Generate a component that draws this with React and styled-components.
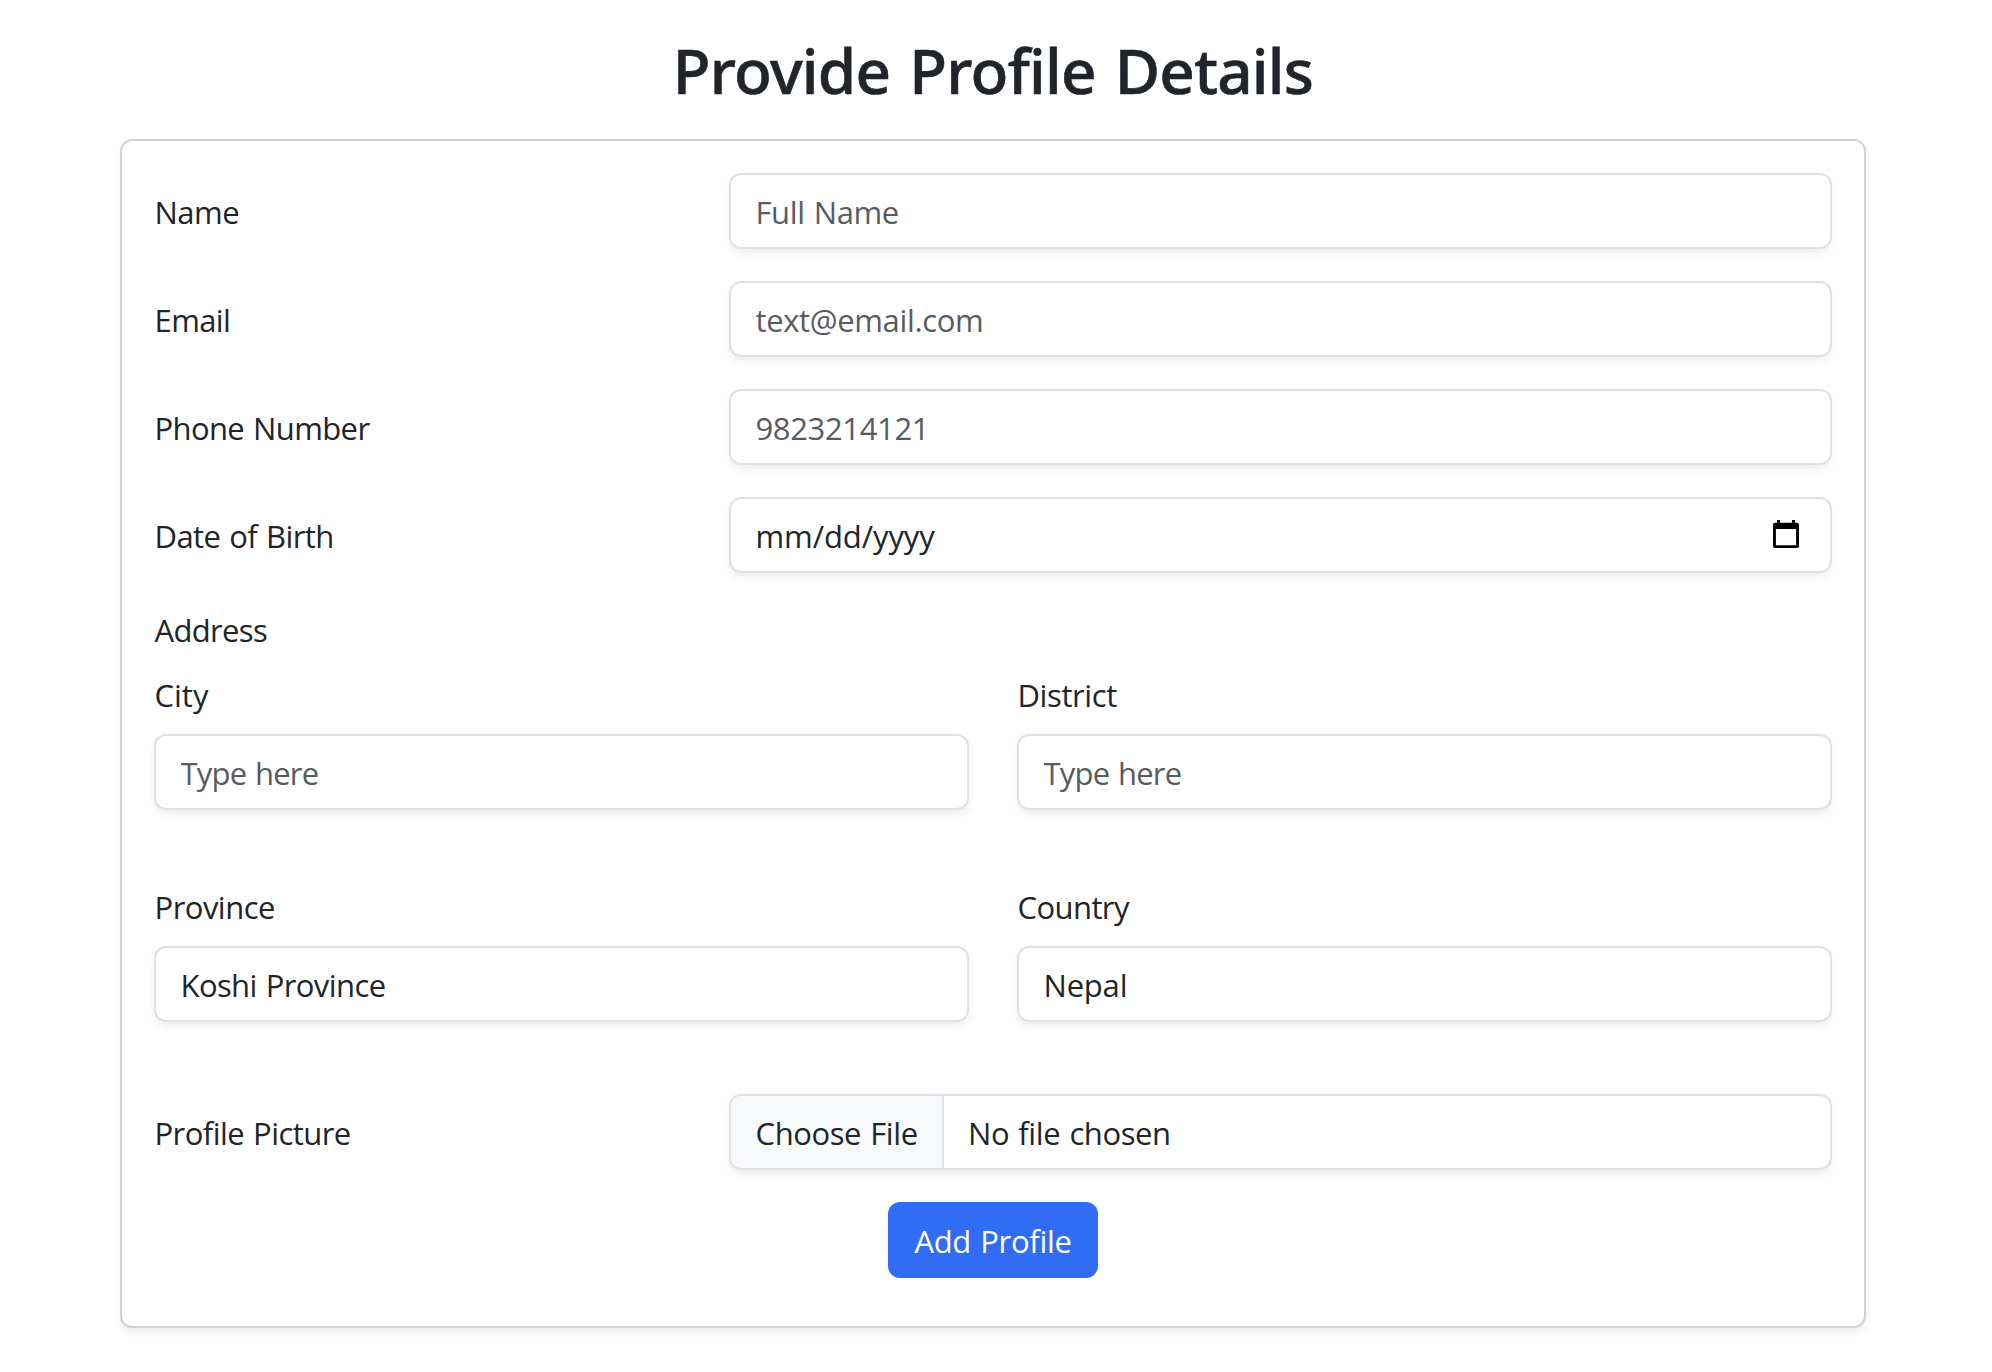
import React from 'react';
import styled, { createGlobalStyle } from 'styled-components';

const GlobalStyle = createGlobalStyle`
  *, *::before, *::after { box-sizing: border-box; }
  body {
    margin: 0;
    background: #fff;
    color: #212529;
    font-family: "Open Sans", "Noto Sans", sans-serif;
    font-size: 31px;
    line-height: 48px;
    word-spacing: 1.5px;
  }
`;

const Page = styled.main`
  width: 1986px;
  padding: 32px 120px 44px;
`;

const Title = styled.h1`
  margin: 0 0 31px;
  font-family: "Noto Sans", "Open Sans", sans-serif;
  font-size: 62px;
  font-weight: 500;
  line-height: 76px;
  letter-spacing: -0.75px;
  word-spacing: 3.5px;
  text-align: center;
  white-space: nowrap;
  -webkit-text-stroke: 0.6px #212529;
`;

const Card = styled.form`
  display: flex;
  flex-direction: column;
  height: 1189px;
  padding: 32px;
  border: 2px solid #d2d2d2;
  border-radius: 12px;
  background: #fff;
  box-shadow: 0 4px 8px rgba(0, 0, 0, 0.075);
`;

const Row = styled.div`
  display: grid;
  grid-template-columns: 575px 1103px;
  margin-bottom: 32px;
`;

const RowLabel = styled.label`
  padding: 15px 0 13px 0.5px;
  letter-spacing: ${(p) => p.$track}px;
`;

const control = `
  width: 100%;
  height: 76px;
  border: 2px solid #dee2e6;
  border-radius: 12px;
  background: #fff;
  color: #212529;
  box-shadow: 0 4px 8px rgba(0, 0, 0, 0.075);
`;

const Input = styled.input`
  ${control}
  display: block;
  margin: 0;
  padding: 13px 24px 11px 24.5px;
  font: inherit;
  letter-spacing: ${(p) => p.$track}px;
  word-spacing: 1.5px;
  outline: none;

  &::placeholder {
    color: #595c5f;
    opacity: 1;
  }
`;

const DateField = styled.div`
  ${control}
  display: flex;
  align-items: center;
  justify-content: space-between;
  padding: 13px 31px 11px 24.5px;
  letter-spacing: -0.1px;
`;

const CalendarIcon = styled.svg`
  display: block;
  width: 26px;
  height: 28px;
  margin-bottom: 4px;
`;

const FileField = styled.div`
  ${control}
  display: flex;
  overflow: hidden;
`;

const FileButton = styled.span`
  width: 213px;
  padding: 13px 0 11px 24.5px;
  border-right: 2px solid #dee2e6;
  background: #f8f9fb;
  letter-spacing: -0.4px;
  white-space: nowrap;
`;

const FileName = styled.span`
  padding: 13px 24px 11px;
  letter-spacing: -0.4px;
`;

const SectionLabel = styled.div`
  margin-bottom: 17px;
  padding: 1px 0 0 0.5px;
  letter-spacing: -0.66px;
`;

const Columns = styled.div`
  display: grid;
  grid-template-columns: 1fr 1fr;
  column-gap: 48px;
  margin-bottom: ${(p) => p.$gap}px;
`;

const Field = styled.div`
  display: flex;
  flex-direction: column;
`;

const FieldLabel = styled.label`
  margin-bottom: 15px;
  padding-left: 0.5px;
  letter-spacing: ${(p) => p.$track}px;
`;

const Submit = styled.button`
  align-self: center;
  width: 210px;
  height: 76px;
  padding: 15px 0 13px;
  border: 0;
  border-radius: 12px;
  background: #316cf4;
  color: #fff;
  font: inherit;
  letter-spacing: -0.3px;
  word-spacing: 1.5px;
`;

function LabeledField({ label, track, inputTrack, ...rest }) {
  return (
    <Field>
      <FieldLabel $track={track}>{label}</FieldLabel>
      <Input $track={inputTrack} {...rest} />
    </Field>
  );
}

export default function App() {
  return (
    <>
      <GlobalStyle />
      <Page>
        <Title>Provide Profile Details</Title>
        <Card>
          <Row>
            <RowLabel $track={-0.5}>Name</RowLabel>
            <Input $track={-0.4} placeholder="Full Name" />
          </Row>
          <Row>
            <RowLabel $track={-0.6}>Email</RowLabel>
            <Input $track={-0.36} placeholder="text@email.com" />
          </Row>
          <Row>
            <RowLabel $track={-0.62}>Phone Number</RowLabel>
            <Input $track={-0.36} placeholder="9823214121" />
          </Row>
          <Row>
            <RowLabel $track={-0.6}>Date of Birth</RowLabel>
            <DateField>
              mm/dd/yyyy
              <CalendarIcon viewBox="0 0 26 28">
                <path
                  fill="#000"
                  fillRule="evenodd"
                  d="M4 0h3v2.7h12V0h3v2.7h2a2 2 0 0 1 2 2V26a2 2 0 0 1-2 2H2a2 2 0 0 1-2-2V4.7a2 2 0 0 1 2-2h2zM2.9 9v16.2h20.2V9z"
                />
              </CalendarIcon>
            </DateField>
          </Row>
          <SectionLabel>Address</SectionLabel>
          <Columns $gap={73}>
            <LabeledField label="City" track={0} inputTrack={-0.8} placeholder="Type here" />
            <LabeledField label="District" track={-0.4} inputTrack={-0.8} placeholder="Type here" />
          </Columns>
          <Columns $gap={72}>
            <LabeledField label="Province" track={-0.52} inputTrack={-0.6} defaultValue="Koshi Province" />
            <LabeledField label="Country" track={-0.58} inputTrack={-0.2} defaultValue="Nepal" />
          </Columns>
          <Row>
            <RowLabel $track={-0.55}>Profile Picture</RowLabel>
            <FileField>
              <FileButton>Choose File</FileButton>
              <FileName>No file chosen</FileName>
            </FileField>
          </Row>
          <Submit type="button">Add Profile</Submit>
        </Card>
      </Page>
    </>
  );
}
